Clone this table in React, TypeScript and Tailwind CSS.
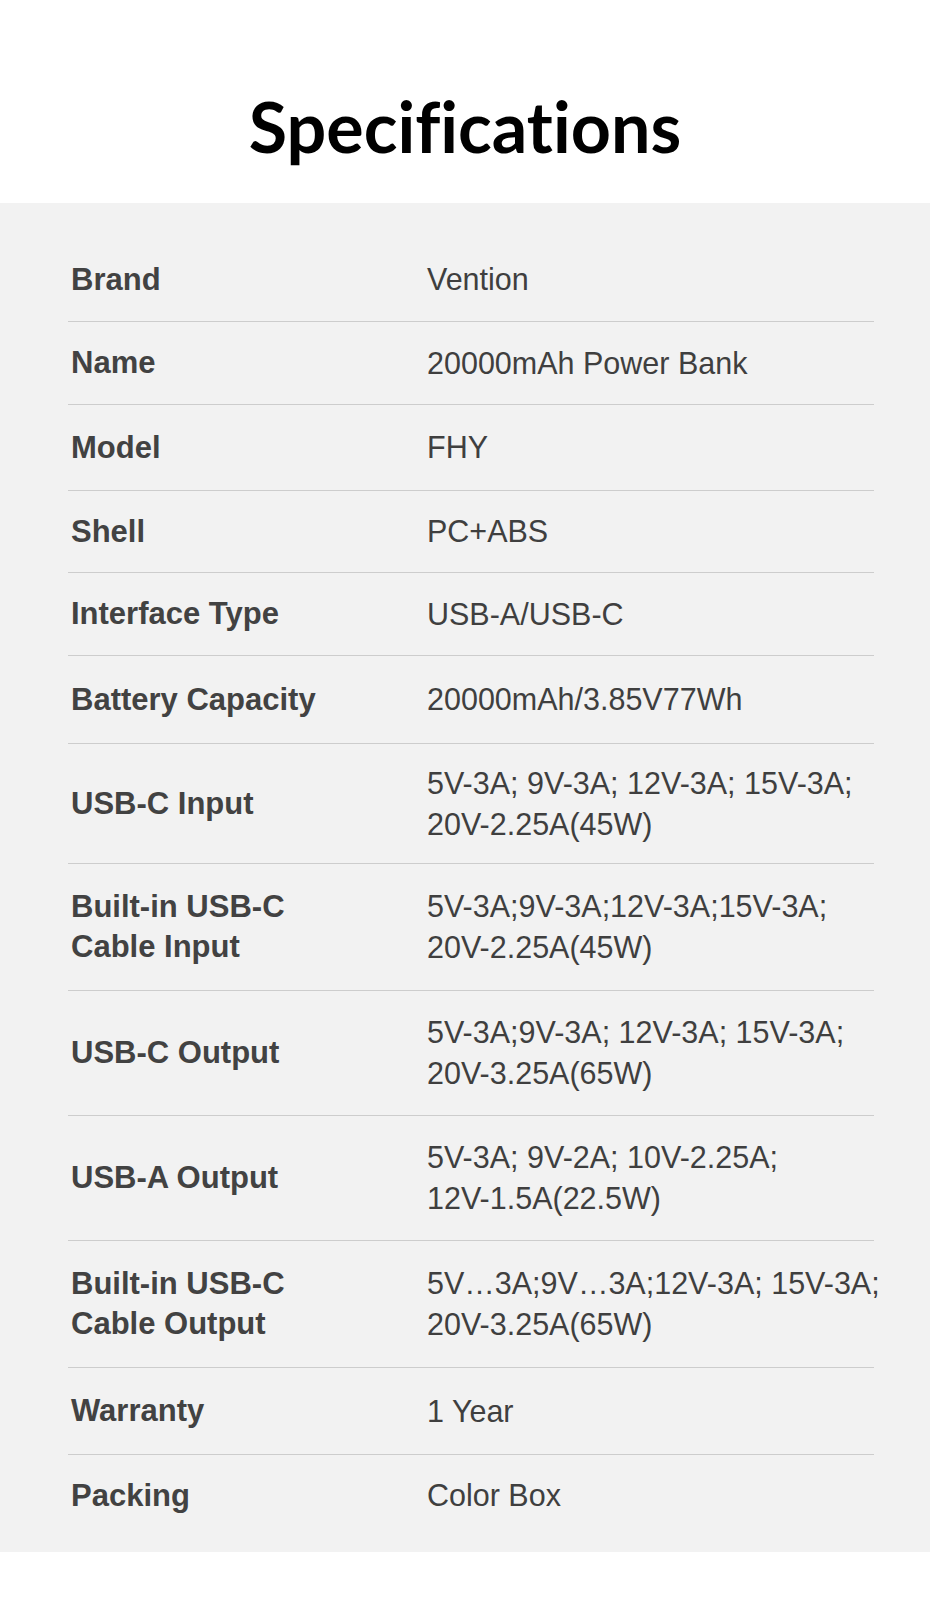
type Spec = {
    label: string[];
    value: string[];
    height: string;
};

const specs: Spec[] = [
    { label: ['Brand'], value: ['Vention'], height: 'h-[83px]' },
    { label: ['Name'], value: ['20000mAh Power Bank'], height: 'h-[83px]' },
    { label: ['Model'], value: ['FHY'], height: 'h-[86px]' },
    { label: ['Shell'], value: ['PC+ABS'], height: 'h-[82px]' },
    { label: ['Interface Type'], value: ['USB-A/USB-C'], height: 'h-[83px]' },
    { label: ['Battery Capacity'], value: ['20000mAh/3.85V77Wh'], height: 'h-[88px]' },
    {
        label: ['USB-C Input'],
        value: ['5V-3A; 9V-3A; 12V-3A; 15V-3A;', '20V-2.25A(45W)'],
        height: 'h-[120px]',
    },
    {
        label: ['Built-in USB-C', 'Cable Input'],
        value: ['5V-3A;9V-3A;12V-3A;15V-3A;', '20V-2.25A(45W)'],
        height: 'h-[127px]',
    },
    {
        label: ['USB-C Output'],
        value: ['5V-3A;9V-3A; 12V-3A; 15V-3A;', '20V-3.25A(65W)'],
        height: 'h-[125px]',
    },
    {
        label: ['USB-A Output'],
        value: ['5V-3A; 9V-2A; 10V-2.25A;', '12V-1.5A(22.5W)'],
        height: 'h-[125px]',
    },
    {
        label: ['Built-in USB-C', 'Cable Output'],
        value: ['5V…3A;9V…3A;12V-3A; 15V-3A;', '20V-3.25A(65W)'],
        height: 'h-[127px]',
    },
    { label: ['Warranty'], value: ['1 Year'], height: 'h-[87px]' },
    { label: ['Packing'], value: ['Color Box'], height: 'h-[82px]' },
];

export default function App() {
    return (
        <div className="w-[930px] h-[1617px] bg-white font-['Liberation_Sans',Arial,sans-serif]">
            <header className="h-[203px] flex justify-center pt-[84px]">
                <h1 className="font-['Lato',sans-serif] font-bold text-[70px] leading-[84px] text-black [font-variant-ligatures:none]">
                    Specifications
                </h1>
            </header>

            <section className="bg-[#f2f2f2] pt-[35px] pb-[16px]">
                <div className="ml-[68px] w-[806px]">
                    {specs.map((spec, i) => (
                        <div
                            key={i}
                            className={
                                'flex items-center ' +
                                spec.height +
                                (i > 0 ? ' border-t border-[#cdcdcd]' : '')
                            }
                        >
                            <div className="w-[359px] shrink-0 pl-[3px] text-[31px] leading-[40px] font-bold text-[#424242]">
                                {spec.label.map((l) => (
                                    <div key={l}>{l}</div>
                                ))}
                            </div>
                            <div className="text-[30.5px] leading-[41px] text-[#3f3f3f] whitespace-nowrap">
                                {spec.value.map((v) => (
                                    <div key={v}>{v}</div>
                                ))}
                            </div>
                        </div>
                    ))}
                </div>
            </section>
        </div>
    );
}
